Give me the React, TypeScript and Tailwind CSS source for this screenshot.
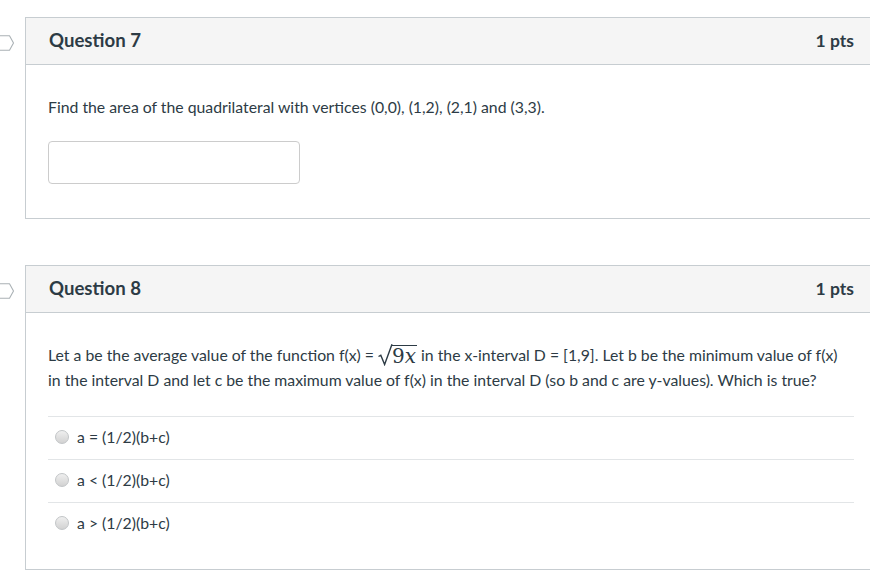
import React from 'react';

const Marker: React.FC = () => (
  <svg className="absolute left-0 top-[17px]" width="17" height="16" viewBox="0 0 17 16">
    <path
      d="M2.5 0.7 H11.5 L15.5 8 L11.5 15.3 H2.5 Q0.3 15.3 0.3 13 V3 Q0.3 0.7 2.5 0.7 Z"
      fill="white"
      stroke="#aab1b5"
      strokeWidth="1.1"
      strokeLinejoin="round"
    />
  </svg>
);

const Header: React.FC<{ title: string }> = ({ title }) => (
  <div className="relative flex items-center justify-between h-[47px] bg-[#f5f5f5] border-b border-[#c7cdd1] pl-[23px] pr-[26px]">
    <div className="absolute -left-[28px] top-0 h-full">
      <Marker />
    </div>
    <h2 className="text-[18.6px] font-bold text-[#2d3b45]">{title}</h2>
    <span className="text-[17.5px] font-bold text-[#2d3b45]">1 pts</span>
  </div>
);

const Sqrt: React.FC = () => (
  <span className="inline-flex items-end align-[-5px] ml-[4px] mr-[4px]">
    <svg width="15" height="23" viewBox="0 0 15 23" className="-mr-px">
      <path d="M0.5 13.5 L2.8 12.3 L6.6 21.5 L14 1.2" fill="none" stroke="#2d3b45" strokeWidth="1.4" />
    </svg>
    <span
      className="border-t-[1.4px] border-[#2d3b45] pt-[1px] pr-[1px] leading-[19px] text-[20px] text-[#2d3b45]"
      style={{ fontFamily: '"DejaVu Serif", "Liberation Serif", serif' }}
    >
      9<i>x</i>
    </span>
  </span>
);

const Radio: React.FC<{ label: string }> = ({ label }) => (
  <div className="flex items-center h-[43px] border-t border-[#e2e5e7] pl-[7px] pb-[2px]">
    <span className="w-[14px] h-[14px] rounded-full border border-[#c2c5c7] bg-gradient-to-b from-[#efefef] to-[#d2d2d2] mr-[8px]" />
    <span className="text-[15.8px] text-[#2d3b45]">{label}</span>
  </div>
);

const App: React.FC = () => {
  return (
    <div className="min-h-[581px] bg-white pt-[17px] overflow-hidden" style={{ fontFamily: 'Lato, "Open Sans", sans-serif' }}>
      <div className="ml-[25px] w-[855px] border-y border-l border-[#c7cdd1]">
        <Header title="Question 7" />
        <div className="pl-[22px] pr-[26px] pt-[31px] pb-[34px]">
          <p className="text-[15.8px] leading-[21px] text-[#2d3b45]">
            Find the area of the quadrilateral with vertices (0,0), (1,2), (2,1) and (3,3).
          </p>
          <div className="mt-[24px] w-[252px] h-[43px] rounded-[4px] border border-[#cccccc] bg-white" />
        </div>
      </div>

      <div className="ml-[25px] mt-[46px] w-[855px] border-y border-l border-[#c7cdd1]">
        <Header title="Question 8" />
        <div className="pl-[22px] pr-[26px] pt-[29px] pb-[24px]">
          <p className="text-[15.8px] leading-[25px] text-[#2d3b45]">
            Let a be the average value of the function f(x) =<Sqrt />in the x-interval D = [1,9]. Let b be the minimum value of f(x) in the interval D and let c be the maximum value of f(x) in the interval D (so b and c are y-values). Which is true?
          </p>
          <div className="mt-[24px]">
            <Radio label="a = (1/2)(b+c)" />
            <Radio label="a < (1/2)(b+c)" />
            <Radio label="a > (1/2)(b+c)" />
          </div>
        </div>
      </div>
    </div>
  );
};

export default App;
